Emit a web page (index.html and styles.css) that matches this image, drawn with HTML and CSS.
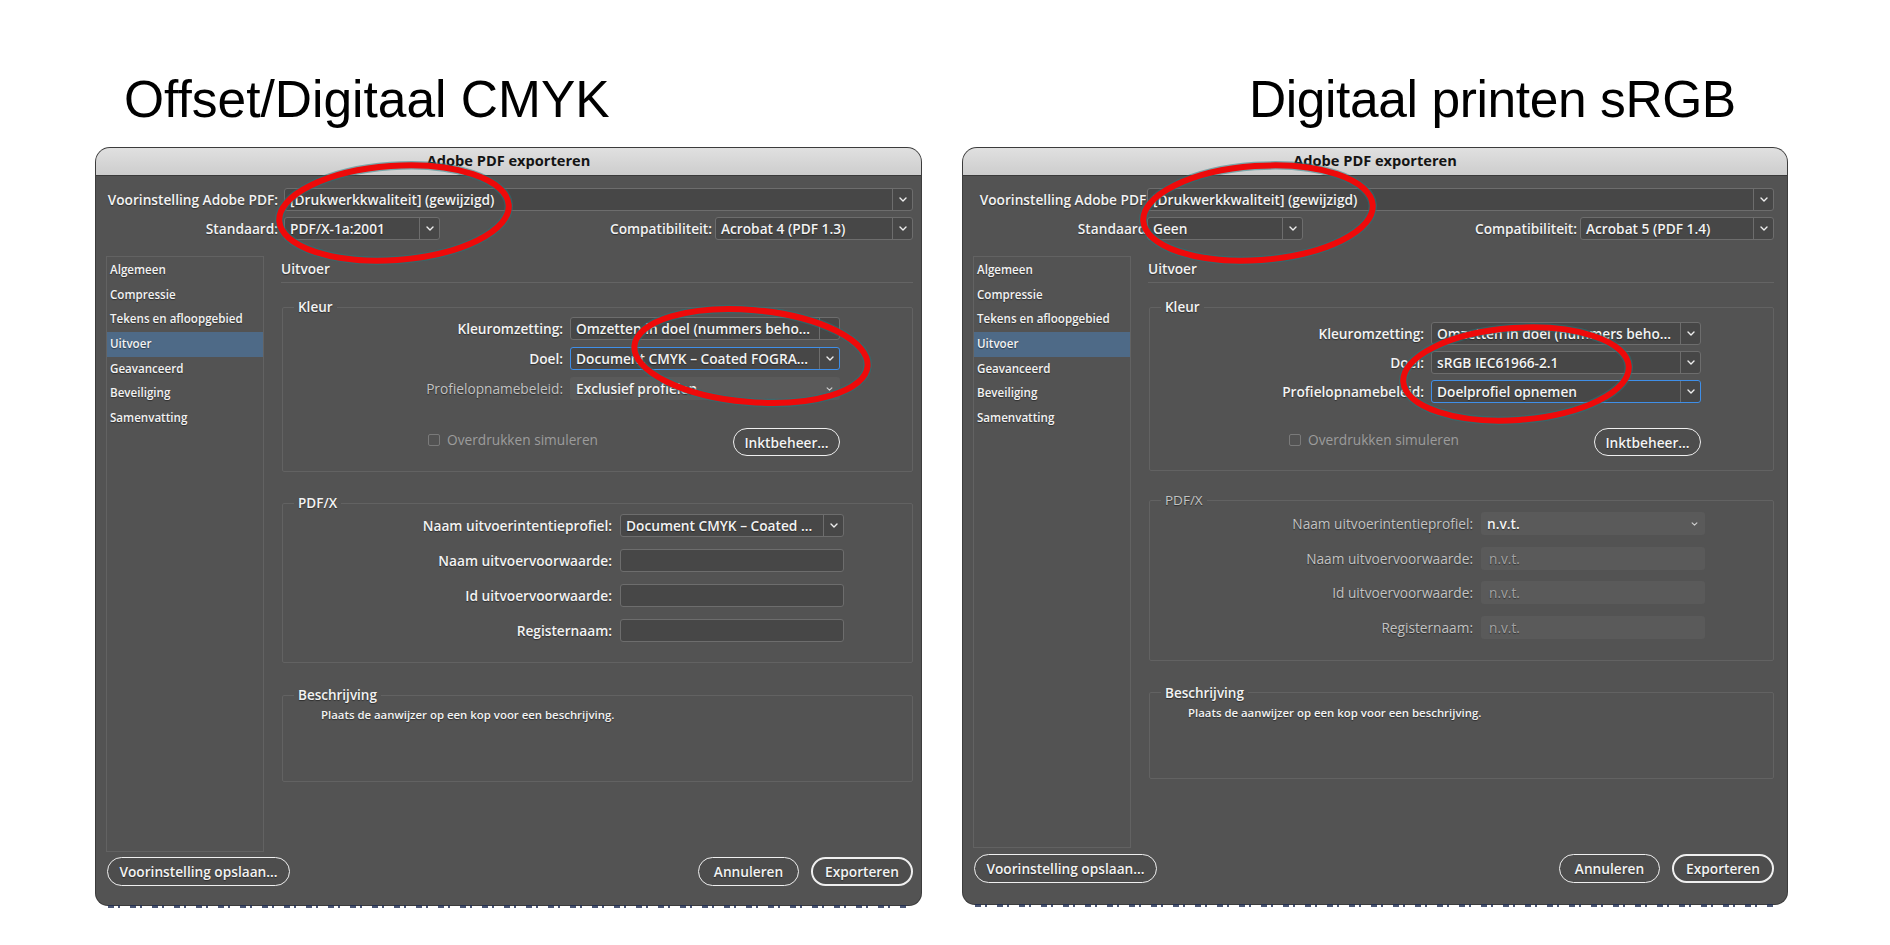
FILE: index.html
```html
<!DOCTYPE html>
<html lang="nl">
<head>
<meta charset="utf-8">
<title>Adobe PDF exporteren – CMYK vs sRGB</title>
<link rel="stylesheet" href="styles.css">
</head>
<body>
<div class="page">
  <section class="col col-left">
    <h1 class="heading">Offset/Digitaal CMYK</h1>
    <div class="dialog">
      <div class="titlebar">Adobe PDF exporteren</div>
      <div class="dlg-body">
        <div class="top-grid">
          <span class="lbl">Voorinstelling Adobe PDF:</span>
          <div class="select"><span class="val">[Drukwerkkwaliteit] (gewijzigd)</span><span class="arr"><svg class="chev" viewBox="0 0 8 5" width="8" height="5"><path d="M1 1l3 3 3-3"/></svg></span></div>
          <span class="lbl">Standaard:</span>
          <div class="row2">
            <div class="select std"><span class="val">PDF/X-1a:2001</span><span class="arr"><svg class="chev" viewBox="0 0 8 5" width="8" height="5"><path d="M1 1l3 3 3-3"/></svg></span></div>
            <span class="lbl compat-lbl">Compatibiliteit:</span>
            <div class="select compat"><span class="val">Acrobat 4 (PDF 1.3)</span><span class="arr"><svg class="chev" viewBox="0 0 8 5" width="8" height="5"><path d="M1 1l3 3 3-3"/></svg></span></div>
          </div>
        </div>
        <div class="main">
          <nav class="nav">
            <div class="nav-item">Algemeen</div>
            <div class="nav-item">Compressie</div>
            <div class="nav-item">Tekens en afloopgebied</div>
            <div class="nav-item sel">Uitvoer</div>
            <div class="nav-item">Geavanceerd</div>
            <div class="nav-item">Beveiliging</div>
            <div class="nav-item">Samenvatting</div>
          </nav>
          <div class="content">
            <div class="section-title">Uitvoer</div>
            <fieldset class="group kleur">
              <legend>Kleur</legend>
              <div class="kgrid">
                <span class="lbl">Kleuromzetting:</span>
                <div class="select"><span class="val">Omzetten in doel (nummers beho...</span><span class="arr"><svg class="chev" viewBox="0 0 8 5" width="8" height="5"><path d="M1 1l3 3 3-3"/></svg></span></div>
                <span class="lbl">Doel:</span>
                <div class="select focus"><span class="val">Document CMYK – Coated FOGRA...</span><span class="arr"><svg class="chev" viewBox="0 0 8 5" width="8" height="5"><path d="M1 1l3 3 3-3"/></svg></span></div>
                <span class="lbl dim">Profielopnamebeleid:</span>
                <div class="select dis"><span class="val">Exclusief profielen</span><span class="arr"><svg class="chev small" viewBox="0 0 8 5" width="7" height="4"><path d="M1 1l3 3 3-3"/></svg></span></div>
                <div class="actions">
                  <span class="check"><span class="cb"></span>Overdrukken simuleren</span>
                  <span class="btn btn-ink">Inktbeheer...</span>
                </div>
              </div>
            </fieldset>
            <fieldset class="group pdfx">
              <legend>PDF/X</legend>
              <div class="pgrid">
                <span class="lbl">Naam uitvoerintentieprofiel:</span>
                <div class="select"><span class="val">Document CMYK – Coated ...</span><span class="arr"><svg class="chev" viewBox="0 0 8 5" width="8" height="5"><path d="M1 1l3 3 3-3"/></svg></span></div>
                <span class="lbl">Naam uitvoervoorwaarde:</span>
                <div class="field"></div>
                <span class="lbl">Id uitvoervoorwaarde:</span>
                <div class="field"></div>
                <span class="lbl">Registernaam:</span>
                <div class="field"></div>
              </div>
            </fieldset>
            <fieldset class="group besch">
              <legend>Beschrijving</legend>
              <p class="desc">Plaats de aanwijzer op een kop voor een beschrijving.</p>
            </fieldset>
          </div>
        </div>
        <div class="footer">
          <span class="btn btn-save">Voorinstelling opslaan...</span>
          <span class="btn btn-wide">Annuleren</span>
          <span class="btn btn-wide btn-default">Exporteren</span>
        </div>
      </div>
    </div>
    <div class="strip"></div>
  </section>

  <section class="col col-right">
    <h1 class="heading">Digitaal printen sRGB</h1>
    <div class="dialog alt">
      <div class="titlebar">Adobe PDF exporteren</div>
      <div class="dlg-body">
        <div class="top-grid">
          <span class="lbl">Voorinstelling Adobe PDF:</span>
          <div class="select"><span class="val">[Drukwerkkwaliteit] (gewijzigd)</span><span class="arr"><svg class="chev" viewBox="0 0 8 5" width="8" height="5"><path d="M1 1l3 3 3-3"/></svg></span></div>
          <span class="lbl">Standaard:</span>
          <div class="row2">
            <div class="select std"><span class="val">Geen</span><span class="arr"><svg class="chev" viewBox="0 0 8 5" width="8" height="5"><path d="M1 1l3 3 3-3"/></svg></span></div>
            <span class="lbl compat-lbl">Compatibiliteit:</span>
            <div class="select compat"><span class="val">Acrobat 5 (PDF 1.4)</span><span class="arr"><svg class="chev" viewBox="0 0 8 5" width="8" height="5"><path d="M1 1l3 3 3-3"/></svg></span></div>
          </div>
        </div>
        <div class="main">
          <nav class="nav">
            <div class="nav-item">Algemeen</div>
            <div class="nav-item">Compressie</div>
            <div class="nav-item">Tekens en afloopgebied</div>
            <div class="nav-item sel">Uitvoer</div>
            <div class="nav-item">Geavanceerd</div>
            <div class="nav-item">Beveiliging</div>
            <div class="nav-item">Samenvatting</div>
          </nav>
          <div class="content">
            <div class="section-title">Uitvoer</div>
            <fieldset class="group kleur">
              <legend>Kleur</legend>
              <div class="kgrid">
                <span class="lbl">Kleuromzetting:</span>
                <div class="select"><span class="val">Omzetten in doel (nummers beho...</span><span class="arr"><svg class="chev" viewBox="0 0 8 5" width="8" height="5"><path d="M1 1l3 3 3-3"/></svg></span></div>
                <span class="lbl">Doel:</span>
                <div class="select"><span class="val">sRGB IEC61966-2.1</span><span class="arr"><svg class="chev" viewBox="0 0 8 5" width="8" height="5"><path d="M1 1l3 3 3-3"/></svg></span></div>
                <span class="lbl">Profielopnamebeleid:</span>
                <div class="select focus"><span class="val">Doelprofiel opnemen</span><span class="arr"><svg class="chev" viewBox="0 0 8 5" width="8" height="5"><path d="M1 1l3 3 3-3"/></svg></span></div>
                <div class="actions">
                  <span class="check"><span class="cb"></span>Overdrukken simuleren</span>
                  <span class="btn btn-ink">Inktbeheer...</span>
                </div>
              </div>
            </fieldset>
            <fieldset class="group pdfx">
              <legend class="dim-legend">PDF/X</legend>
              <div class="pgrid">
                <span class="lbl dim">Naam uitvoerintentieprofiel:</span>
                <div class="select dis"><span class="val">n.v.t.</span><span class="arr"><svg class="chev small" viewBox="0 0 8 5" width="7" height="4"><path d="M1 1l3 3 3-3"/></svg></span></div>
                <span class="lbl dim">Naam uitvoervoorwaarde:</span>
                <div class="field dis">n.v.t.</div>
                <span class="lbl dim">Id uitvoervoorwaarde:</span>
                <div class="field dis">n.v.t.</div>
                <span class="lbl dim">Registernaam:</span>
                <div class="field dis">n.v.t.</div>
              </div>
            </fieldset>
            <fieldset class="group besch">
              <legend>Beschrijving</legend>
              <p class="desc">Plaats de aanwijzer op een kop voor een beschrijving.</p>
            </fieldset>
          </div>
        </div>
        <div class="footer">
          <span class="btn btn-save">Voorinstelling opslaan...</span>
          <span class="btn btn-wide">Annuleren</span>
          <span class="btn btn-wide btn-default">Exporteren</span>
        </div>
      </div>
    </div>
    <div class="strip"></div>
  </section>

  <svg class="marks" width="1890" height="945" viewBox="0 0 1890 945" aria-hidden="true">
    <g class="halo">
      <ellipse cx="394" cy="213" rx="115" ry="47" transform="rotate(-4 394 213)"/>
      <ellipse cx="751" cy="356" rx="117" ry="46" transform="rotate(5 751 356)"/>
      <ellipse cx="1258" cy="213" rx="115" ry="47" transform="rotate(-4 1258 213)"/>
      <ellipse cx="1516" cy="374" rx="113" ry="46" transform="rotate(-4 1516 374)"/>
    </g>
    <g class="ring">
      <ellipse cx="394" cy="213" rx="115" ry="47" transform="rotate(-4 394 213)"/>
      <ellipse cx="751" cy="356" rx="117" ry="46" transform="rotate(5 751 356)"/>
      <ellipse cx="1258" cy="213" rx="115" ry="47" transform="rotate(-4 1258 213)"/>
      <ellipse cx="1516" cy="374" rx="113" ry="46" transform="rotate(-4 1516 374)"/>
    </g>
  </svg>
</div>
</body>
</html>
```

FILE: styles.css
```css
html, body {
  margin: 0;
  background: #ffffff;
}

.page {
  position: relative;
  width: 1890px;
  height: 945px;
  box-sizing: border-box;
  padding: 73px 0 0 96px;
  display: flex;
  gap: 42px;
  overflow: hidden;
  font-family: "Open Sans", "DejaVu Sans", sans-serif;
}

.col {
  display: flex;
  flex-direction: column;
}

.col-left { width: 825px; }
.col-right { width: 824px; }

.heading {
  margin: 0 0 23px;
  font-family: "Liberation Sans", Arial, sans-serif;
  font-weight: 400;
  font-size: 51.5px;
  line-height: 52px;
  color: #000;
  white-space: nowrap;
}

.col-left .heading { padding-left: 28px; }
.col-right .heading { padding-left: 286px; letter-spacing: -0.4px; }

/* ---------- dialog ---------- */
.dialog {
  background: #535353;
  border-radius: 14px 14px 12px 12px;
  overflow: hidden;
  box-shadow: 0 0 0 1px #3c3c3c;
}

.titlebar {
  height: 27px;
  line-height: 24px;
  border-bottom: 1px solid #3a3a3a;
  background: linear-gradient(#e0e0e0, #cdcdcd);
  text-align: center;
  font-weight: 700;
  font-size: 14.6px;
  color: #141414;
}

.dlg-body {
  padding: 12px 8px 19px 10px;
  color: #f3f3f3;
  font-size: 13.7px;
  font-weight: 600;
  text-shadow: 0 1px 1px rgba(0, 0, 0, 0.45);
}

.top-grid {
  display: grid;
  grid-template-columns: 178px 1fr;
  grid-auto-rows: 23px;
  row-gap: 6px;
  align-items: center;
}

.lbl {
  text-align: right;
  padding-right: 6px;
  white-space: nowrap;
}

.lbl.dim {
  color: #c3c3c3;
  font-weight: 400;
}

.row2 {
  display: flex;
  align-items: center;
  height: 23px;
}

.select {
  display: flex;
  align-items: center;
  height: 23px;
  box-sizing: border-box;
  border: 1px solid #6d6d6d;
  border-radius: 3px;
  background: #474747;
  position: relative;
}

.select .val {
  flex: 1;
  padding-left: 5px;
  white-space: nowrap;
  overflow: hidden;
}

.select .arr {
  width: 19px;
  align-self: stretch;
  border-left: 1px solid #6d6d6d;
  display: flex;
  align-items: center;
  justify-content: center;
}

.select.focus {
  border-color: #3f8fe8;
}

.select.dis {
  border-color: transparent;
  background: #5a5a5a;
}

.select.dis .arr {
  border-left-color: transparent;
}

.chev path {
  fill: none;
  stroke: #eeeeee;
  stroke-width: 1.4;
  stroke-linecap: round;
  stroke-linejoin: round;
}

.chev.small path { stroke: #d0d0d0; }

.std { width: 156px; }
.compat-lbl { flex: 1; padding-right: 3px; }
.compat { width: 198px; }

.field {
  height: 23px;
  box-sizing: border-box;
  border: 1px solid #6d6d6d;
  border-radius: 3px;
  background: #474747;
}

.field.dis {
  border-color: transparent;
  background: #5a5a5a;
  color: #a2a2a2;
  font-weight: 400;
  padding-left: 7px;
  line-height: 21px;
}

/* ---------- main area ---------- */
.main {
  display: flex;
  margin-top: 16px;
}

.nav {
  width: 158px;
  height: 596px;
  flex: none;
  box-sizing: border-box;
  border: 1px solid #626262;
  padding-top: 1px;
  font-size: 11.6px;
}

.nav-item {
  height: 24.67px;
  line-height: 24.67px;
  padding-left: 3px;
  white-space: nowrap;
}

.nav-item.sel {
  background: #4e6a87;
}

.content {
  flex: 1;
  margin-left: 17px;
}

.section-title {
  height: 26px;
  line-height: 26px;
  border-bottom: 1px solid #646464;
}

.group {
  margin: 0 0 0 1px;
  padding: 0;
  min-width: 0;
  border: 1px solid #626262;
  border-radius: 2px;
}

.group legend {
  margin-left: 11px;
  padding: 0 4px;
  line-height: 18px;
  font-size: 13.5px;
}

.group legend.dim-legend {
  color: #c3c3c3;
  font-weight: 400;
}

.kleur {
  margin-top: 15px;
  padding: 1px 72px 15px 0;
}

.kgrid {
  display: grid;
  grid-template-columns: 160px 270px;
  grid-template-rows: 23px 23px 23px auto;
  justify-content: end;
  column-gap: 7px;
  row-gap: 7px;
  align-items: center;
}

.kgrid .lbl { padding-right: 0; }

.actions {
  grid-column: 1 / -1;
  display: flex;
  align-items: center;
  justify-content: space-between;
  height: 28px;
  margin-top: 21px;
  padding-left: 25px;
}

.check {
  display: flex;
  align-items: center;
  color: #9c9c9c;
  font-weight: 400;
  text-shadow: none;
  margin-top: -5px;
}

.cb {
  width: 12px;
  height: 12px;
  box-sizing: border-box;
  border: 1px solid #7a7a7a;
  border-radius: 2px;
  margin-right: 7px;
}

.btn {
  display: inline-flex;
  align-items: center;
  justify-content: center;
  box-sizing: border-box;
  height: 28px;
  border: 1.5px solid #efefef;
  border-radius: 14px;
  background: #4d4d4d;
  white-space: nowrap;
}

.btn-ink { width: 107px; }

.pdfx {
  margin-top: 22px;
  padding: 2px 68px 20px 0;
}

.pgrid {
  display: grid;
  grid-template-columns: 240px 224px;
  grid-auto-rows: 23px;
  justify-content: end;
  column-gap: 8px;
  row-gap: 12px;
  align-items: center;
}

.pgrid .lbl { padding-right: 0; }

.besch {
  margin-top: 23px;
  padding: 4px 0 59px;
}

.desc {
  margin: 0 0 0 38px;
  font-size: 11.4px;
  line-height: 14px;
}

/* ---------- footer ---------- */
.footer {
  display: flex;
  gap: 12px;
  margin-top: 5px;
  padding-left: 1px;
}

.footer .btn { height: 29px; border-radius: 15px; }
.btn-save { width: 183px; margin-right: auto; }
.btn-wide { width: 101px; }
.footer .btn-default { border-width: 2.5px; width: 102px; }

/* ---------- right dialog tweaks ---------- */
.alt .dlg-body { padding-right: 13px; padding-bottom: 21px; }
.alt .top-grid { grid-template-columns: 174px 1fr; }
.alt .top-grid > .lbl { padding-right: 0; margin-right: -3px; }
.alt .compat { width: 194px; }
.alt .kleur { padding-top: 6px; padding-bottom: 14px; }
.alt .kgrid { row-gap: 6px; }
.alt .actions { margin-top: 19px; }
.alt .pdfx { margin-top: 20px; padding-top: 3px; padding-bottom: 21px; }
.alt .pgrid { row-gap: 11.5px; }
.alt .besch { margin-top: 23px; padding-top: 4px; padding-bottom: 58px; }
.alt .nav { height: 592px; }
.alt .footer { margin-top: 6px; }

/* strip of the window behind */
.strip {
  height: 3px;
  margin: 0 12px;
  background: repeating-linear-gradient(90deg,
    #1f2d52 0 6px, transparent 6px 10px,
    #1f2d52 10px 12px, transparent 12px 22px);
  opacity: 0.8;
}

/* ---------- annotation rings ---------- */
.marks {
  position: absolute;
  left: 0;
  top: 0;
  pointer-events: none;
}

.marks ellipse { fill: none; }
.halo ellipse { stroke: #1f7a80; stroke-width: 8.5; opacity: 0.5; }
.ring ellipse { stroke: #ee0a0a; stroke-width: 6; }
```
